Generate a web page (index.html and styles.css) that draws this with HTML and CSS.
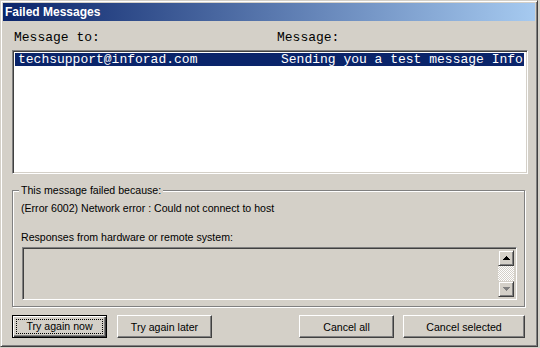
FILE: index.html
```html
<!DOCTYPE html>
<html lang="en">
<head>
    <meta charset="UTF-8">
    <title>Failed Messages</title>
    <link rel="stylesheet" href="styles.css">
</head>
<body>

<div class="window">
    <div class="titlebar">Failed Messages</div>

    <div class="content">
        <div class="list-head">
            <span>Message to:</span>
            <span>Message:</span>
        </div>

        <div class="listbox">
            <div class="list-row selected">
                <span>techsupport@inforad.com</span>
                <span>Sending you a test message Inforad</span>
            </div>
        </div>

        <fieldset class="group">
            <legend>This message failed because:</legend>
            <div class="error-text">(Error 6002) Network error : Could not connect to host</div>
            <div class="resp-label">Responses from hardware or remote system:</div>
            <div class="resp-box">
                <div class="resp-text"></div>
                <div class="scrollbar">
                    <div class="sb-btn"><svg width="7" height="4" viewBox="0 0 7 4"><path d="M3 0h1v1h1v1h1v1h1v1H0V3h1V2h1V1h1z" fill="#000"/></svg></div>
                    <div class="sb-track"></div>
                    <div class="sb-btn"><svg width="7" height="4" viewBox="0 0 7 4"><path d="M0 0h7v1H6v1H5v1H4v1H3V3H2V2H1V1H0z" fill="#808080"/></svg></div>
                </div>
            </div>
        </fieldset>

        <div class="buttons">
            <button class="btn default"><span class="focus">Try again now</span></button>
            <button class="btn">Try again later</button>
            <button class="btn push-right">Cancel all</button>
            <button class="btn wide">Cancel selected</button>
        </div>
    </div>
</div>

</body>
</html>
```

FILE: styles.css
```css
body {
    margin: 0;
    background-color: #d4d0c8;
    font-family: "Liberation Sans", Arial, sans-serif;
    font-size: 10.6px;
    color: #000;
}
.window {
    width: 538px;
    height: 347px;
    box-sizing: border-box;
    border: 1px solid;
    border-color: #d4d0c8 #404040 #404040 #d4d0c8;
    box-shadow: inset 1px 1px 0 #fff, inset -1px -1px 0 #808080;
    padding: 2px;
}
.titlebar {
    height: 18px;
    line-height: 18px;
    padding-left: 2px;
    background: linear-gradient(to right, #0a246a, #a6caf0);
    color: #fff;
    font-weight: bold;
    font-size: 12px;
}
.content {
    padding: 9px 7px 0 9px;
}
.list-head {
    display: grid;
    grid-template-columns: 263px 1fr;
    padding-left: 2px;
    font-family: "Liberation Mono", "Courier New", monospace;
    font-size: 13px;
    line-height: 16px;
}
.listbox {
    margin-top: 4px;
    height: 124px;
    box-sizing: border-box;
    background-color: #fff;
    border: 1px solid;
    border-color: #808080 #fff #fff #808080;
    box-shadow: inset 1px 1px 0 #404040, inset -1px -1px 0 #d4d0c8;
    padding: 2px 3px 2px 2px;
    overflow: hidden;
}
.list-row {
    display: grid;
    grid-template-columns: 263px 1fr;
    height: 13px;
    line-height: 13px;
    padding-left: 3px;
    font-family: "Liberation Mono", "Courier New", monospace;
    font-size: 13px;
    white-space: nowrap;
    overflow: hidden;
}
.list-row.selected {
    background-color: #0a246a;
    color: #fff;
}
.group {
    margin: 10px 3px 0 0;
    padding: 5px 7px 6px 9px;
    border: 1px solid #808080;
    box-shadow: inset 1px 1px 0 #fff, 1px 1px 0 #fff;
    min-width: 0;
}
.group legend {
    margin-left: -3px;
    padding: 0 2px;
    line-height: 13px;
    background-color: #d4d0c8;
}
.error-text {
    line-height: 13px;
    margin-left: -1px;
}
.resp-label {
    line-height: 13px;
    margin-top: 16px;
    margin-left: -1px;
}
.resp-box {
    display: flex;
    margin-top: 3px;
    height: 53px;
    box-sizing: border-box;
    border: 1px solid;
    border-color: #808080 #fff #fff #808080;
    box-shadow: inset 1px 1px 0 #404040, inset -1px -1px 0 #d4d0c8;
    padding: 2px;
}
.resp-text {
    flex: 1;
}
.scrollbar {
    width: 16px;
    display: flex;
    flex-direction: column;
}
.sb-btn {
    height: 16px;
    box-sizing: border-box;
    border: 1px solid;
    border-color: #d4d0c8 #404040 #404040 #d4d0c8;
    box-shadow: inset 1px 1px 0 #fff, inset -1px -1px 0 #808080;
    display: flex;
    align-items: center;
    justify-content: center;
}
.sb-track {
    flex: 1;
    background-color: #d4d0c8;
    background-image: repeating-conic-gradient(#fff 0 25%, #d4d0c8 0 50%);
    background-size: 2px 2px;
}
.buttons {
    display: flex;
    gap: 10px;
    margin-top: 8px;
}
.btn {
    width: 95px;
    height: 23px;
    box-sizing: border-box;
    font-family: "Liberation Sans", Arial, sans-serif;
    font-size: 10.6px;
    color: #000;
    background-color: #d4d0c8;
    border: 1px solid;
    border-color: #fff #404040 #404040 #fff;
    box-shadow: inset -1px -1px 0 #808080;
    padding: 0;
}
.btn.default {
    border: 1px solid #000;
    box-shadow: inset 1px 1px 0 #fff, inset -1px -1px 0 #404040, inset -2px -2px 0 #808080;
    padding: 3px;
}
.btn .focus {
    display: block;
    height: 100%;
    box-sizing: border-box;
    border: 1px dotted #000;
    line-height: 13px;
}
.push-right {
    margin-left: auto;
}
.btn.wide {
    width: 122px;
    margin-left: -1px;
    margin-right: 3px;
}
```
